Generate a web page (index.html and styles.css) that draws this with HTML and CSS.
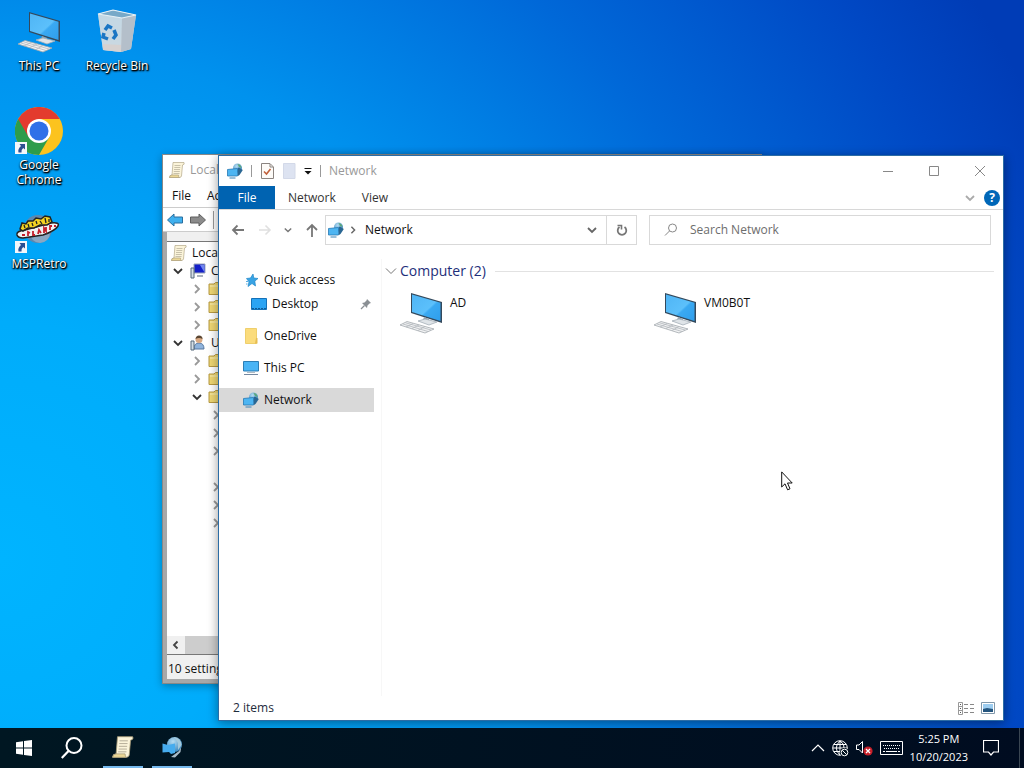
FILE: index.html
```html
<!DOCTYPE html>
<html lang="en">
<head>
    <meta charset="UTF-8">
    <meta name="viewport" content="width=device-width, initial-scale=1.0">
    <title>Network</title>
    <link rel="stylesheet" href="styles.css">
</head>
<body>

    <!-- Shared icons -->
    <svg class="sprite" aria-hidden="true">
        <defs>
            <linearGradient id="screen" x1="0" y1="0" x2="1" y2="1">
                <stop offset="0" stop-color="#4fb5f5"/>
                <stop offset="0.55" stop-color="#5cc0fb"/>
                <stop offset="0.6" stop-color="#3aa9f2"/>
                <stop offset="1" stop-color="#2f9eec"/>
            </linearGradient>
            <linearGradient id="bin" x1="0" y1="0" x2="0" y2="1">
                <stop offset="0" stop-color="#b9d8ea"/>
                <stop offset="1" stop-color="#e3dcd8"/>
            </linearGradient>
            <radialGradient id="globe" cx="0.4" cy="0.3" r="0.8">
                <stop offset="0" stop-color="#b5dcf2"/>
                <stop offset="1" stop-color="#2f7fb8"/>
            </radialGradient>
        </defs>
        <symbol id="icon-pc" viewBox="0 0 48 48">
            <path d="M14 4 L45 13 V34 L14 24 Z" fill="#34495c"/>
            <path d="M15 5.500 L43.500 13.800 V32 L15 23 Z" fill="url(#screen)"/>
            <path d="M27 28 L32 30 V32 L26 31 Z" fill="#93a3b0"/>
            <path d="M21 32 L28 30 L40 33 L32 36 Z" fill="#dfe4e8" stroke="#a5afb7" stroke-width="0.800"/>
            <path d="M3 36 L10 32.500 L37 40 L28 44 Z" fill="#f1f2f3" stroke="#a2a8ad" stroke-width="0.800"/>
            <path d="M6 35 L31 42.500 M8.500 33.800 L34 41 M9 38 L16 34.500 M15 39.500 L22 36 M21 41.500 L28 37.500" stroke="#b3b8bc" stroke-width="0.800" fill="none"/>
        </symbol>
        <symbol id="icon-network" viewBox="0 0 16 16">
            <circle cx="10.500" cy="5" r="4.500" fill="url(#globe)"/>
            <path d="M10.500 1 Q14 1.500 14.500 5 L12 4 Z" fill="#5ea87a"/>
            <path d="M11 5 L12 4.500 L15.800 7 L12.500 12 L11 13 Z" fill="#2a6793"/>
            <path d="M0.500 6.500 L10.500 5.500 V13 H0.500 Z" fill="#4db5f2" stroke="#2678b4" stroke-width="0.800"/>
            <path d="M2.500 15 H8.500" stroke="#3a82b5" stroke-width="1"/>
        </symbol>
        <symbol id="icon-scroll" viewBox="0 0 16 16">
            <path d="M4 0.500 H15 Q16 2.500 13.500 3 L12.500 14 Q12 15.500 10.500 15.500 H0.500 Q0.500 13 3 13 Z" fill="#fbf4da" stroke="#a89b78" stroke-width="0.600"/>
            <path d="M5.500 3.500 H11.500 M5.300 5.500 H11.300 M5 7.500 H11 M4.800 9.500 H10.800 M4.500 11.500 H10.500" stroke="#a79f8c" stroke-width="0.600"/>
            <path d="M0.500 15.500 Q0.500 13 3 13 H9.500 Q9.500 15.500 10.500 15.500 Z" fill="#ecd896" stroke="#a89b78" stroke-width="0.600"/>
        </symbol>
        <symbol id="icon-folder" viewBox="0 0 16 16">
            <path d="M1 13.500 V3 H6 L7.500 1.500 H13 V13.500 Z" fill="#efd773" stroke="#b79a43"/>
            <path d="M2 5 H13" stroke="#fbf0b8"/>
        </symbol>
        <symbol id="icon-right" viewBox="0 0 10 10">
            <path d="M3 1 L7 5 L3 9" fill="none" stroke="currentColor" stroke-width="1.800"/>
        </symbol>
        <symbol id="icon-down" viewBox="0 0 10 10">
            <path d="M1 3 L5 7 L9 3" fill="none" stroke="currentColor" stroke-width="1.800"/>
        </symbol>
        <symbol id="icon-shortcut" viewBox="0 0 12 12">
            <path d="M0 0 H12 V12 H0 Z" fill="#f4f6fa"/>
            <path d="M4.500 2 H10 V7.500 L8.200 6 Q6 7.500 6.500 10.500 H3.500 Q2.500 7 6 4 Z" fill="#2c4f92"/>
        </symbol>
    </svg>

    <div class="desktop">
        <div class="icon-column">
            <a class="shortcut" href="#">
                <span class="picture"><svg width="48" height="48"><use href="#icon-pc"/></svg></span>
                This PC
            </a>
            <a class="shortcut" href="#">
                <span class="picture">
                    <svg width="48" height="48" viewBox="0 0 48 48">
                        <circle cx="24" cy="24" r="24" fill="#fcc31e"/>
                        <path d="M24 24 L3.200 12 A24 24 0 0 0 24 48 L34.400 30 Z" fill="#2d9c4b"/>
                        <path d="M24 12 H44.800 A24 24 0 0 0 3.200 12 L13.600 30 Z" fill="#e33b2e"/>
                        <circle cx="24" cy="24" r="12" fill="#fff"/>
                        <circle cx="24" cy="24" r="9.500" fill="#2f70e8"/>
                    </svg>
                    <svg class="arrow" width="12" height="12"><use href="#icon-shortcut"/></svg>
                </span>
                Google<br>Chrome
            </a>
            <a class="shortcut" href="#">
                <span class="picture">
                    <svg width="48" height="48" viewBox="0 0 48 48">
                        <circle cx="23" cy="23" r="14" fill="#5d87ad"/>
                        <circle cx="25" cy="27" r="10" fill="#8aa7c2"/>
                        <path d="M2 29 Q1 25 10 24 L36 17 Q45 16 43 20 Q40 25 28 29 L8 32 Q3 32 2 29 Z" fill="#f2f2f2" stroke="#222" stroke-width="1.500"/>
                        <path d="M5 23 L7 17 L11 18 L13 15 L18 15 L21 12 L26 13 L30 10 L35 11 L37 16 L32 19 L25 19 L19 22 L13 22 L8 25 Z" fill="#f4d322" stroke="#222" stroke-width="1.500"/>
                        <path d="M9 19 L10 22 M13 18 L14 21 M17 17 L18 20 M21 15 L22 18 M25 15 L27 18 M30 12 L31 17 M34 13 V16" stroke="#222" stroke-width="1.300"/>
                        <path d="M7 29 H10 M13 30 V26 L15 27 M18 25 V29 H20 M23 28 L24 24 L26 27 M29 27 V22 L31 25 V21 M35 24 V20 H37 M39 20 H41" stroke="#c4202c" stroke-width="1.800" fill="none"/>
                    </svg>
                    <svg class="arrow" width="12" height="12"><use href="#icon-shortcut"/></svg>
                </span>
                MSPRetro
            </a>
        </div>
        <div class="icon-column">
            <a class="shortcut" href="#">
                <span class="picture">
                    <svg width="48" height="48" viewBox="0 0 48 48">
                        <path d="M5 6 L20 2 L43 7 L38 41 L28 44 L10 42 Z" fill="url(#bin)"/>
                        <path d="M5 6 L29 10 L28 44 L10 42 Z" fill="#c4d7e4" opacity="0.800"/>
                        <path d="M29 10 L43 7 L38 41 L28 44 Z" fill="#b4bfca"/>
                        <path d="M10 36 L28 37 V44 L10 42 Z" fill="#dccfc9" opacity="0.700"/>
                        <path d="M5 6 L20 2 L43 7 L29 10 Z" fill="#78a9c8" stroke="#e8f1f6" stroke-width="1.200"/>
                        <path d="M12 22 L15 18 L19 20 M21 22 L23 27 L20 31 M15 31 L10 29 L11 25" fill="none" stroke="#1b76c4" stroke-width="3.500"/>
                    </svg>
                </span>
                Recycle Bin
            </a>
        </div>
    </div>

    <!-- Policy editor, behind -->
    <section class="window editor">
        <header class="editor-title">
            <svg width="16" height="16"><use href="#icon-scroll"/></svg>
            Local
        </header>
        <nav class="editor-menu">
            <button>File</button>
            <button>Act</button>
        </nav>
        <div class="editor-tools">
            <button aria-label="Back"><svg width="16" height="16" viewBox="0 0 16 16"><path d="M0.500 8 L7 2 V5 H15.500 V11 H7 V14 Z" fill="#3fb0ee" stroke="#2b6f9f"/></svg></button>
            <button aria-label="Forward"><svg width="16" height="16" viewBox="0 0 16 16"><path d="M15.500 8 L9 2 V5 H0.500 V11 H9 V14 Z" fill="#8b8b8b" stroke="#5f5f5f"/></svg></button>
            <i class="bar"></i>
        </div>
        <div class="editor-body">
            <div class="tree">
                <ul>
                    <li class="root"><svg width="16" height="16"><use href="#icon-scroll"/></svg>Local</li>
                    <li class="level1"><svg class="open" width="10" height="10"><use href="#icon-down"/></svg>
                        <svg width="16" height="16" viewBox="0 0 16 16"><path d="M4 1 H15 V10 H4 Z" fill="#1420c8" stroke="#9da7b8"/><path d="M10 2 L14.500 9.500 V2 Z" fill="#7086ee"/><path d="M7 12 H13 V14 H7 Z" fill="#a9b2bd"/><path d="M1 5 H4 V15 H1 Z" fill="#d6dfe6" stroke="#55697b"/></svg>Com</li>
                    <li class="level2"><svg width="10" height="10"><use href="#icon-right"/></svg><svg width="16" height="16"><use href="#icon-folder"/></svg></li>
                    <li class="level2"><svg width="10" height="10"><use href="#icon-right"/></svg><svg width="16" height="16"><use href="#icon-folder"/></svg></li>
                    <li class="level2"><svg width="10" height="10"><use href="#icon-right"/></svg><svg width="16" height="16"><use href="#icon-folder"/></svg></li>
                    <li class="level1"><svg class="open" width="10" height="10"><use href="#icon-down"/></svg>
                        <svg width="16" height="16" viewBox="0 0 16 16"><path d="M4 14 Q4 8 9 8 Q14 8 14 14 Z" fill="#8fb3dc" stroke="#56779f"/><circle cx="9" cy="4.500" r="3.500" fill="#d9a983"/><path d="M5.500 4 Q6 0.500 9 0.500 Q12.500 0.500 12.500 4 Q9 2 5.500 4 Z" fill="#5a4632"/><path d="M1 6 H4 V15 H1 Z" fill="#d6dfe6" stroke="#55697b"/></svg>User</li>
                    <li class="level2"><svg width="10" height="10"><use href="#icon-right"/></svg><svg width="16" height="16"><use href="#icon-folder"/></svg></li>
                    <li class="level2"><svg width="10" height="10"><use href="#icon-right"/></svg><svg width="16" height="16"><use href="#icon-folder"/></svg></li>
                    <li class="level2"><svg class="open" width="10" height="10"><use href="#icon-down"/></svg><svg width="16" height="16"><use href="#icon-folder"/></svg></li>
                    <li class="level3"><svg width="10" height="10"><use href="#icon-right"/></svg></li>
                    <li class="level3"><svg width="10" height="10"><use href="#icon-right"/></svg></li>
                    <li class="level3"><svg width="10" height="10"><use href="#icon-right"/></svg></li>
                    <li class="level3"></li>
                    <li class="level3"><svg width="10" height="10"><use href="#icon-right"/></svg></li>
                    <li class="level3"><svg width="10" height="10"><use href="#icon-right"/></svg></li>
                    <li class="level3"><svg width="10" height="10"><use href="#icon-right"/></svg></li>
                </ul>
                <div class="scrollbar">
                    <button aria-label="Scroll left"><svg width="10" height="10" viewBox="0 0 10 10"><path d="M6.500 1.500 L3 5 L6.500 8.500" fill="none" stroke="#444" stroke-width="1.800"/></svg></button>
                    <div class="thumb"></div>
                </div>
            </div>
            <footer class="editor-status">10 setting</footer>
        </div>
    </section>

    <!-- File explorer -->
    <main class="window explorer">
        <header class="titlebar">
            <svg width="16" height="16"><use href="#icon-network"/></svg>
            <i class="bar"></i>
            <button aria-label="Properties"><svg width="14" height="16" viewBox="0 0 14 16"><path d="M1.500 0.500 H10 L13.500 4 V15.500 H1.500 Z" fill="#fdfbf8" stroke="#8b8480"/><path d="M10 1 V4 H13" fill="none" stroke="#8b8480"/><path d="M4 8.500 L6.500 11 L10.500 6" fill="none" stroke="#c1603a" stroke-width="1.600"/></svg></button>
            <button aria-label="New folder"><svg width="14" height="16" viewBox="0 0 14 16"><path d="M1.500 0.500 H13 V15.500 H1.500 Z" fill="#dde3f1" stroke="#d3d9e8"/></svg></button>
            <button aria-label="Customize toolbar"><svg width="8" height="8" viewBox="0 0 8 8"><path d="M0.500 1.500 H7.500" stroke="#111"/><path d="M0.500 4 H7.500 L4 7.500 Z" fill="#111"/></svg></button>
            <i class="bar"></i>
            <span class="title">Network</span>
            <div class="controls">
                <button aria-label="Minimize"><svg width="10" height="10" viewBox="0 0 10 10"><path d="M0 5.500 H10" stroke="#888"/></svg></button>
                <button aria-label="Maximize"><svg width="10" height="10" viewBox="0 0 10 10"><path d="M0.500 0.500 H9.500 V9.500 H0.500 Z" fill="none" stroke="#888"/></svg></button>
                <button aria-label="Close"><svg width="10" height="10" viewBox="0 0 10 10"><path d="M0 0 L10 10 M10 0 L0 10" stroke="#888"/></svg></button>
            </div>
        </header>

        <nav class="ribbon">
            <button class="file">File</button>
            <button>Network</button>
            <button>View</button>
            <div class="ribbon-end">
                <button aria-label="Expand ribbon"><svg width="10" height="10"><use href="#icon-down"/></svg></button>
                <button class="help" aria-label="Help">?</button>
            </div>
        </nav>

        <div class="navbar">
            <div class="arrows">
                <button aria-label="Back"><svg width="14" height="14" viewBox="0 0 14 14"><path d="M13 7 H2 M6.500 2.500 L2 7 L6.500 11.500" fill="none" stroke="#777" stroke-width="1.800"/></svg></button>
                <button aria-label="Forward"><svg width="14" height="14" viewBox="0 0 14 14"><path d="M1 7 H12 M7.500 2.500 L12 7 L7.500 11.500" fill="none" stroke="#e0e0e0" stroke-width="1.600"/></svg></button>
                <button aria-label="Recent locations"><svg width="8" height="8"><use href="#icon-down"/></svg></button>
                <button aria-label="Up"><svg width="14" height="14" viewBox="0 0 14 14"><path d="M7 14 V2 M2 7 L7 2 L12 7" fill="none" stroke="#777" stroke-width="1.800"/></svg></button>
            </div>
            <div class="address">
                <svg width="16" height="16"><use href="#icon-network"/></svg>
                <svg class="crumb" width="8" height="8"><use href="#icon-right"/></svg>
                <span>Network</span>
                <button class="dropdown" aria-label="Previous locations"><svg width="10" height="10"><use href="#icon-down"/></svg></button>
                <button class="refresh" aria-label="Refresh"><svg width="12" height="12" viewBox="0 0 12 12"><path d="M3.500 3 A4.300 4.300 0 1 0 8.500 3" fill="none" stroke="#777" stroke-width="1.800"/><path d="M1.500 1.500 H5.500 V5.500" fill="none" stroke="#777" stroke-width="1.600"/></svg></button>
            </div>
            <label class="search">
                <svg width="14" height="14" viewBox="0 0 14 14"><circle cx="8.500" cy="5" r="4" fill="none" stroke="#888"/><path d="M5.500 8 L1 12.500" stroke="#888"/></svg>
                <input type="text" placeholder="Search Network" aria-label="Search Network">
            </label>
        </div>

        <div class="content">
            <nav class="sidebar">
                <a href="#"><svg width="16" height="16" viewBox="0 0 16 16"><path d="M10 2 L10.800 6 L15 6.500 L11.800 9 L12.500 14 L9 11.500 L5 14.500 L6 9.800 L3.500 6.500 L7.500 6 Z" fill="#38a3e4" stroke="#2086c8" stroke-width="0.700"/><path d="M3 9.500 H5.500 M3 12 H4.500" stroke="#5aaee0"/></svg>Quick access</a>
                <a class="child" href="#"><svg width="16" height="16" viewBox="0 0 16 16"><path d="M0.500 2.500 H15.500 V13.500 H0.500 Z" fill="#2ba4f3" stroke="#1471b8"/><path d="M1 12.500 H15" stroke="#0d5b98" stroke-dasharray="2 1"/></svg>Desktop
                    <svg class="pin" width="12" height="12" viewBox="0 0 12 12"><path d="M7 1 L11 5 L9.500 5.500 L7.500 7.500 L7 10 L2 5 L4.500 4.500 L6.500 2.500 Z" fill="#8a8f94"/><path d="M4.500 7.500 L1 11" stroke="#8a8f94" stroke-width="1.300"/></svg></a>
                <a class="group" href="#"><svg width="16" height="16" viewBox="0 0 16 16"><path d="M2.500 0.500 H13.500 V15.500 H2.500 Z" fill="#fbdc7c" stroke="#efcf6c"/><path d="M13 10 H14.500 V15.500 H12 Z" fill="#e6bd52"/></svg>OneDrive</a>
                <a class="group" href="#"><svg width="16" height="16" viewBox="0 0 16 16"><path d="M0.500 1.500 H15.500 V11 H0.500 Z" fill="#49b4f5" stroke="#2c7eb5"/><path d="M4 12.500 H12" stroke="#b3bcc4"/><path d="M1 14.500 H15" stroke="#7488a0"/></svg>This PC</a>
                <a class="group selected" href="#"><svg width="16" height="16"><use href="#icon-network"/></svg>Network</a>
            </nav>
            <section class="files">
                <h2><svg width="12" height="12" viewBox="0 0 12 12"><path d="M1 3.500 L6 8.500 L11 3.500" fill="none" stroke="#777"/></svg>Computer (2)</h2>
                <div class="tiles">
                    <a href="#"><svg width="48" height="48"><use href="#icon-pc"/></svg>AD</a>
                    <a href="#"><svg width="48" height="48"><use href="#icon-pc"/></svg>VM0B0T</a>
                </div>
            </section>
        </div>

        <footer class="status">
            <span>2 items</span>
            <button aria-label="Details"><svg width="16" height="13" viewBox="0 0 16 13"><path d="M0.500 0.500 H4.500 V12.500 H0.500 Z M0.500 4.500 H4.500 M0.500 8.500 H4.500" fill="none" stroke="#999"/><path d="M2 2.500 H3 M2 6.500 H3 M2 10.500 H3" stroke="#555"/><path d="M6 2.500 H16 M6 6.500 H16 M6 10.500 H16" stroke="#888" stroke-dasharray="4 2"/></svg></button>
            <button aria-label="Large icons"><svg width="14" height="12" viewBox="0 0 14 12"><path d="M0.500 0.500 H13.500 V11.500 H0.500 Z" fill="#fff" stroke="#8198aa"/><path d="M2 2 H12 V10 H2 Z" fill="#9dcdf0"/><path d="M2 7 L6 6 L12 7 V10 H2 Z" fill="#24557e"/></svg></button>
        </footer>
    </main>

    <svg class="pointer" width="12" height="20" viewBox="0 0 12 20"><path d="M0.700 0.900 V16 L4 12.800 L6.600 18.800 L9 17.800 L6.500 12 H11.200 Z" fill="#fff" stroke="#111"/></svg>

    <footer class="taskbar">
        <button aria-label="Start"><svg width="16" height="16" viewBox="0 0 16 16"><path d="M0 2.200 L7 1.200 V7.500 H0 Z M8 1 L16 0 V7.500 H8 Z M0 8.500 H7 V14.800 L0 13.800 Z M8 8.500 H16 V16 L8 15 Z" fill="#fff"/></svg></button>
        <button aria-label="Search"><svg width="22" height="22" viewBox="0 0 22 22"><circle cx="13" cy="8.500" r="7.500" fill="none" stroke="#fff" stroke-width="2"/><path d="M7.500 14 L0.800 21" stroke="#fff" stroke-width="2.200"/></svg></button>
        <button class="running" aria-label="Local Group Policy Editor"><svg width="22" height="22"><use href="#icon-scroll"/></svg></button>
        <button class="running" aria-label="File Explorer"><svg width="20" height="22" viewBox="0 0 20 22"><path d="M9 21 L17 15 L19.500 9 L18.500 16 L13 21.500 Z" fill="#a9bbc8"/><circle cx="12.500" cy="8.500" r="7.500" fill="url(#globe)"/><path d="M12 1 Q19 2 19.500 9 L16 14 L16 7 Z" fill="#a3c9dc"/><path d="M0.500 7.500 L6 9 L13 7.500 V17 L9 18 L7 16 L0.500 16.500 Z" fill="#46acee"/></svg></button>

        <div class="tray">
            <svg width="14" height="8" viewBox="0 0 14 8"><path d="M1 7 L7 1 L13 7" fill="none" stroke="#fff" stroke-width="1.200"/></svg>
            <svg width="17" height="17" viewBox="0 0 17 17"><circle cx="8" cy="8" r="7.300" fill="none" stroke="#fff"/><path d="M8 1 V15 M1 8 H15 M2 4.500 H14 M2 11.500 H9 M8 1 Q0.500 8 8 15 M8 1 Q13 4 12 8" fill="none" stroke="#fff"/><circle cx="12.500" cy="12.500" r="4.500" fill="#001220"/><circle cx="12.500" cy="12.500" r="3.300" fill="#001220" stroke="#fff"/><path d="M10.300 10.300 L14.700 14.700" stroke="#fff"/></svg>
            <svg width="17" height="16" viewBox="0 0 17 16"><path d="M0.500 5 H3 L6.500 1.500 V13 L3 9.500 H0.500 Z" fill="none" stroke="#fff"/><circle cx="12" cy="11" r="4.600" fill="#c8202a"/><path d="M10 9 L14 13 M14 9 L10 13" stroke="#fff" stroke-width="1.300"/></svg>
            <svg width="23" height="14" viewBox="0 0 23 14"><path d="M0.500 0.500 H22.500 V13.500 H0.500 Z" fill="none" stroke="#fff"/><path d="M3 4.500 H20 M4 7.500 H20" stroke="#fff" stroke-dasharray="1 1"/><path d="M3 10.500 H20" stroke="#fff" stroke-dasharray="2 1 11 1"/></svg>
            <div class="clock">5:25 PM<br>10/20/2023</div>
            <button aria-label="Notifications"><svg width="16" height="16" viewBox="0 0 16 16"><path d="M0.500 0.500 H15.500 V12 H10.500 L8 15 L5.500 12 H0.500 Z" fill="none" stroke="#fff" stroke-width="1.200"/></svg></button>
            <i class="peek"></i>
        </div>
    </footer>

</body>
</html>
```
FILE: styles.css
```css
* {
    box-sizing: border-box;
}

body {
    margin: 0;
    height: 100vh;
    overflow: hidden;
    position: relative;
    display: flex;
    flex-direction: column;
    font-family: "Open Sans", "Noto Sans", sans-serif;
    font-size: 12px;
    line-height: 16px;
    color: #111;
    background: radial-gradient(ellipse 1140px 1080px at 0 560px, #00b4ff 0%, #00acfb 22%, #0092ee 48%, #0068d8 70%, #0048c4 90%, #003cb6 100%);
}

button {
    font: inherit;
    color: inherit;
    background: none;
    border: none;
    padding: 0;
    display: flex;
    align-items: center;
    justify-content: center;
}

a {
    color: inherit;
    text-decoration: none;
}

svg {
    display: block;
    flex: none;
}

.sprite {
    position: absolute;
    width: 0;
    height: 0;
}

/* Desktop */
.desktop {
    flex: 1;
    display: flex;
    padding-top: 8px;
}

.icon-column {
    width: 78px;
    display: flex;
    flex-direction: column;
    gap: 18px;
}

.shortcut {
    min-height: 81px;
    display: flex;
    flex-direction: column;
    align-items: center;
    text-align: center;
    line-height: 15px;
    color: #fff;
    text-shadow: 0 1px 2px #000, 1px 1px 2px #000, 1px 1px 1px #000;
}

.picture {
    position: relative;
    margin-bottom: 2px;
}

.arrow {
    position: absolute;
    left: 0;
    bottom: 1px;
}

/* Windows */
.window {
    position: absolute;
    display: flex;
    flex-direction: column;
    background: #fff;
    overflow: hidden;
}

.bar {
    width: 1px;
    height: 12px;
    background: #999;
}

.editor {
    left: 162px;
    top: 154px;
    bottom: 84px;
    width: 600px;
    border: 1px solid #888;
    box-shadow: 0 2px 8px rgba(0, 0, 0, 0.3);
}

.editor-title {
    display: flex;
    align-items: center;
    gap: 5px;
    height: 30px;
    padding-left: 6px;
    color: #999;
}

.editor-menu {
    display: flex;
    gap: 16px;
    height: 23px;
    padding-left: 9px;
    border-bottom: 1px solid #ccc;
}

.editor-tools {
    display: flex;
    align-items: center;
    gap: 7px;
    height: 24px;
    padding-left: 4px;
    border-bottom: 1px solid #ccc;
}

.editor-tools .bar {
    height: 18px;
}

.editor-body {
    flex: 1;
    display: flex;
    flex-direction: column;
    padding-top: 9px;
    background: #f0f0f0;
    border-left: 4px solid #a8a8a8;
    border-bottom: 4px solid #a8a8a8;
}

.tree {
    flex: 1;
    display: flex;
    flex-direction: column;
    justify-content: space-between;
    background: #fff;
    border: 1px solid #777;
    border-left: none;
}

.tree ul {
    list-style: none;
    margin: 0;
    padding: 2px 0 0 4px;
}

.tree li {
    display: flex;
    align-items: center;
    gap: 5px;
    height: 18px;
    white-space: nowrap;
    color: #999;
}

.tree .root,
.tree .level1 {
    color: #111;
}

.tree .level1 {
    padding-left: 2px;
}

.tree .level1 svg:first-child {
    margin-right: 2px;
}

.tree .open {
    color: #333;
}

.tree .level2 {
    gap: 6px;
    padding-left: 21px;
}

.tree .level3 {
    padding-left: 40px;
}

.scrollbar {
    display: flex;
    height: 18px;
    background: #f0f0f0;
}

.scrollbar button {
    width: 18px;
}

.thumb {
    width: 300px;
    background: #cdcdcd;
}

.editor-status {
    height: 24px;
    line-height: 27px;
    padding-left: 1px;
}

.explorer {
    left: 218px;
    top: 155px;
    right: 20px;
    bottom: 47px;
    border: 1px solid #2b6ca5;
    box-shadow: 0 2px 10px rgba(0, 0, 0, 0.4);
}

.titlebar {
    display: flex;
    align-items: center;
    height: 30px;
    padding-left: 8px;
    gap: 8px;
    color: #999;
}

.titlebar .controls {
    display: flex;
    margin-left: auto;
}

.controls button {
    width: 46px;
    height: 28px;
}

.ribbon {
    display: flex;
    height: 24px;
    border-bottom: 1px solid #d8d8d8;
    color: #333;
}

.ribbon > button {
    padding: 0 13px;
}

.ribbon .file {
    width: 56px;
    background: #0063b1;
    color: #fff;
}

.ribbon-end {
    display: flex;
    align-items: center;
    gap: 9px;
    margin-left: auto;
    padding-right: 3px;
    color: #aaa;
}

.ribbon-end .help {
    width: 16px;
    height: 16px;
    border-radius: 50%;
    background: #0067b8;
    color: #fff;
    font-weight: bold;
}

.navbar {
    display: flex;
    align-items: center;
    padding: 5px 12px 0 12px;
}

.arrows {
    display: flex;
    align-items: center;
    justify-content: space-between;
    width: 94px;
    padding-right: 6px;
    color: #777;
}

.address {
    flex: 308;
    display: flex;
    align-items: center;
    height: 30px;
    padding-left: 2px;
    border: 1px solid #d9d9d9;
}

.crumb {
    margin: 0 8px 0 5px;
    color: #666;
}

.address .dropdown {
    width: 28px;
    height: 28px;
    margin-left: auto;
    color: #666;
}

.address .refresh {
    width: 30px;
    height: 28px;
    border-left: 1px solid #d9d9d9;
}

.search {
    flex: 326;
    display: flex;
    align-items: center;
    gap: 12px;
    height: 30px;
    margin-left: 12px;
    padding-left: 14px;
    border: 1px solid #d9d9d9;
}

.search input {
    flex: 1;
    min-width: 0;
    border: none;
    outline: none;
    padding: 0;
    font: inherit;
    background: none;
}

.search input::placeholder {
    color: #6d6d6d;
}

.content {
    flex: 1;
    display: flex;
    padding-top: 14px;
}

.sidebar {
    width: 163px;
    padding: 9px 7px 0 0;
    border-right: 1px solid #f7f7f7;
}

.sidebar a {
    display: flex;
    align-items: center;
    gap: 5px;
    height: 24px;
    padding-left: 24px;
}

.sidebar .child {
    padding-left: 32px;
}

.sidebar .group {
    margin-top: 8px;
}

.sidebar .selected {
    background: #d9d9d9;
}

.sidebar .pin {
    margin-left: auto;
    margin-right: 2px;
}

.files {
    flex: 1;
    padding: 0 9px 0 3px;
}

.files h2 {
    display: flex;
    align-items: center;
    gap: 3px;
    margin: 0;
    font-size: 14px;
    font-weight: normal;
    line-height: 24px;
    color: #1e2f7a;
}

.files h2::after {
    content: "";
    flex: 1;
    height: 1px;
    margin-left: 6px;
    background: #e2e2e2;
}

.tiles {
    display: grid;
    grid-template-columns: repeat(auto-fill, 254px);
    padding: 6px 0 0 12px;
}

.tiles a {
    display: flex;
    gap: 5px;
    line-height: 28px;
}

.status {
    display: flex;
    align-items: center;
    gap: 7px;
    height: 24px;
    padding: 0 8px 0 14px;
    color: #1e2c3c;
}

.status span {
    flex: 1;
}

.pointer {
    position: absolute;
    left: 781px;
    top: 471px;
}

/* Taskbar */
.taskbar {
    position: relative;
    display: flex;
    height: 40px;
    background: linear-gradient(90deg, #001722, #000c20);
    color: #fff;
}

.taskbar > button {
    width: 48px;
}

.taskbar .running {
    width: 40px;
    margin-left: 7px;
    border-bottom: 2px solid #76b9ed;
}

.taskbar .running + .running {
    margin-left: 9px;
}

.tray {
    display: flex;
    align-items: center;
    gap: 7px;
    margin-left: auto;
    padding-right: 4px;
}

.clock {
    text-align: center;
    font-size: 11px;
    line-height: 18px;
}

.tray button {
    margin-left: 8px;
}

.peek {
    width: 1px;
    height: 40px;
    margin-left: 13px;
    background: #3a4652;
}
```
